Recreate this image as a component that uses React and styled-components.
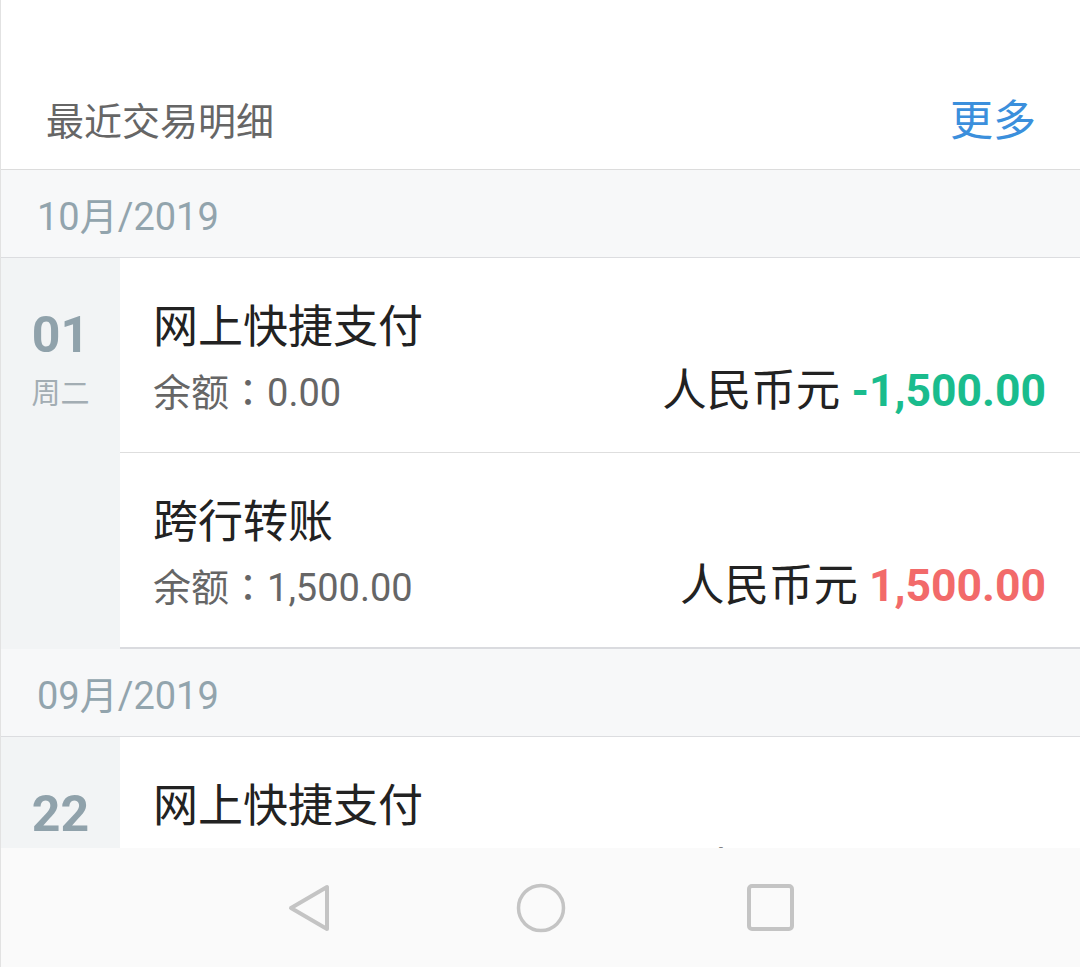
import React from "react";
import styled, { createGlobalStyle } from "styled-components";

const Global = createGlobalStyle`
  html, body { margin: 0; padding: 0; background: #ffffff; }
  * { box-sizing: border-box; }
  body { font-family: Roboto, "Noto Sans CJK SC", sans-serif; }
`;

const Screen = styled.div`
  width: 1080px;
  height: 967px;
  display: flex;
  flex-direction: column;
  border-left: 1px solid #e2e2e2;
  background: #ffffff;
  overflow: hidden;
`;

const Content = styled.div`
  flex: 1;
  overflow: hidden;
  display: flex;
  flex-direction: column;
`;

const Header = styled.div`
  height: 170px;
  flex-shrink: 0;
  display: flex;
  align-items: center;
  justify-content: space-between;
  padding: 74px 44px 0 45px;
  border-bottom: 1px solid #dcdcdc;
`;

const Title = styled.div`
  font-size: 38px;
  line-height: 1;
  color: #666666;
`;

const More = styled.div`
  font-size: 43px;
  line-height: 1;
  color: #3b8fdc;
`;

const MonthBar = styled.div`
  height: 88px;
  flex-shrink: 0;
  display: flex;
  align-items: center;
  padding-left: 36px;
  background: #f7f8f9;
  border-bottom: 1px solid #dcdde0;
  font-size: 38px;
  color: #92a4ad;
`;

const DayGroup = styled.div`
  display: flex;
  flex-shrink: 0;
`;

const DayCol = styled.div`
  width: 119px;
  flex-shrink: 0;
  background: #f2f4f5;
  display: flex;
  flex-direction: column;
  align-items: center;
  padding-top: 52px;
`;

const DayNum = styled.div`
  font-size: 50px;
  font-weight: 700;
  line-height: 1;
  color: #90a2ab;
`;

const WeekDay = styled.div`
  margin-top: 20px;
  font-size: 29px;
  line-height: 1;
  color: #a3adb3;
`;

const Rows = styled.div`
  flex: 1;
  display: flex;
  flex-direction: column;
`;

const Row = styled.div`
  height: ${(p) => (p.$last ? 196 : 195)}px;
  flex-shrink: 0;
  padding: 47px 34px 0 33px;
  border-bottom: ${(p) => (p.$last ? "2px solid #dadbdf" : "1px solid #dedede")};
`;

const TxTitle = styled.div`
  font-size: 45px;
  line-height: 1;
  color: #222222;
`;

const BottomLine = styled.div`
  margin-top: 19px;
  display: flex;
  justify-content: space-between;
  align-items: baseline;
`;

const Balance = styled.div`
  font-size: 38px;
  line-height: 1;
  color: #666666;
`;

const Colon = styled.span`
  font-family: "Noto Sans CJK TC", sans-serif;
`;

const Amount = styled.div`
  font-size: 44.5px;
  line-height: 1;
  color: #222222;
`;

const Money = styled.span`
  font-weight: 700;
  color: ${(p) => (p.$negative ? "#1abc8d" : "#f26a6a")};
`;

const NavBar = styled.div`
  height: 119px;
  flex-shrink: 0;
  background: #fafafa;
  display: flex;
  align-items: center;
  justify-content: center;
  gap: 180px;
`;

const NavIcon = styled.svg`
  width: 50px;
  height: 50px;
  display: block;
`;

const groups = [
  {
    month: "10月/2019",
    day: "01",
    week: "周二",
    items: [
      { title: "网上快捷支付", balance: "0.00", amount: "-1,500.00", negative: true },
      { title: "跨行转账", balance: "1,500.00", amount: "1,500.00", negative: false },
    ],
  },
  {
    month: "09月/2019",
    day: "22",
    week: "周日",
    items: [
      { title: "网上快捷支付", balance: "1,500.00", amount: "-100.00", negative: true },
    ],
  },
];

export default function App() {
  return (
    <>
      <Global />
      <Screen>
        <Content>
          <Header>
            <Title>最近交易明细</Title>
            <More>更多</More>
          </Header>
          {groups.map((g) => (
            <React.Fragment key={g.month}>
              <MonthBar>{g.month}</MonthBar>
              <DayGroup>
                <DayCol>
                  <DayNum>{g.day}</DayNum>
                  <WeekDay>{g.week}</WeekDay>
                </DayCol>
                <Rows>
                  {g.items.map((it, i) => (
                    <Row key={i} $last={i === g.items.length - 1}>
                      <TxTitle>{it.title}</TxTitle>
                      <BottomLine>
                        <Balance>
                          余额<Colon>：</Colon>{it.balance}
                        </Balance>
                        <Amount>
                          人民币元 <Money $negative={it.negative}>{it.amount}</Money>
                        </Amount>
                      </BottomLine>
                    </Row>
                  ))}
                </Rows>
              </DayGroup>
            </React.Fragment>
          ))}
        </Content>
        <NavBar>
          <NavIcon viewBox="0 0 50 50">
            <path
              d="M5 25 L41 4 L41 46 Z"
              fill="none"
              stroke="#c4c4c4"
              strokeWidth="4"
              strokeLinejoin="round"
            />
          </NavIcon>
          <NavIcon viewBox="0 0 50 50">
            <circle cx="25" cy="25" r="22.5" fill="none" stroke="#c4c4c4" strokeWidth="3.5" />
          </NavIcon>
          <NavIcon viewBox="0 0 50 50">
            <rect x="3" y="3" width="43" height="43" rx="3" fill="none" stroke="#c4c4c4" strokeWidth="4" />
          </NavIcon>
        </NavBar>
      </Screen>
    </>
  );
}
